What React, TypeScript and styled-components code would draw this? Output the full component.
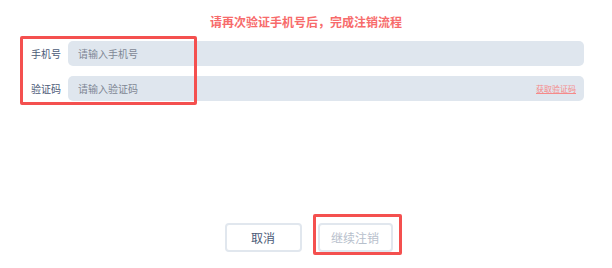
import React from "react";
import styled, { createGlobalStyle } from "styled-components";

const Global = createGlobalStyle`
  html, body { margin: 0; padding: 0; background: #fff; }
  body { font-family: "Noto Sans CJK SC", "Noto Sans", sans-serif; }
`;

const Page = styled.div`
  position: relative;
  width: 612px;
  height: 268px;
  display: flex;
  flex-direction: column;
  box-sizing: border-box;
`;

const Title = styled.div`
  margin-top: 14px;
  text-align: center;
  font-size: 12px;
  line-height: 16px;
  font-weight: 700;
  color: #f76b6b;
`;

const Form = styled.div`
  margin-top: 11px;
  padding: 0 28px 0 31px;
  display: flex;
  flex-direction: column;
  gap: 10px;
`;

const Row = styled.div`
  display: flex;
  align-items: center;
`;

const Label = styled.div`
  width: 37px;
  font-size: 10px;
  color: #4b5a77;
  white-space: nowrap;
`;

const Field = styled.div`
  flex: 1;
  height: 25px;
  border-radius: 5px;
  background: #dfe6ee;
  display: flex;
  align-items: center;
  padding: 0 8px 0 10px;
`;

const Input = styled.input`
  flex: 1;
  border: none;
  outline: none;
  background: transparent;
  font-family: inherit;
  font-size: 10px;
  color: #4b5a77;
  padding: 0;
  &::placeholder { color: #7e8794; }
`;

const Link = styled.a`
  font-size: 8px;
  color: #f58a8a;
  text-decoration: underline;
  cursor: pointer;
`;

const Buttons = styled.div`
  margin-top: auto;
  margin-bottom: 16px;
  display: flex;
  justify-content: center;
  gap: 16px;
  padding-left: 5px;
`;

const Button = styled.button<{ $muted?: boolean }>`
  height: 29px;
  width: ${(p) => (p.$muted ? 75 : 77)}px;
  box-sizing: border-box;
  border: 2px solid #e1e7ee;
  border-radius: 4px;
  background: #fff;
  font-family: inherit;
  font-size: 12px;
  color: ${(p) => (p.$muted ? "#b7c0cc" : "#4b5a77")};
  padding: 0;
`;

const Mark = styled.div<{ $l: number; $t: number; $w: number; $h: number }>`
  position: absolute;
  left: ${(p) => p.$l}px;
  top: ${(p) => p.$t}px;
  width: ${(p) => p.$w}px;
  height: ${(p) => p.$h}px;
  box-sizing: border-box;
  border: 3.5px solid #f4504f;
  border-radius: 2px;
  pointer-events: none;
`;

export default function App() {
  return (
    <Page>
      <Global />
      <Title>请再次验证手机号后，完成注销流程</Title>
      <Form>
        <Row>
          <Label>手机号</Label>
          <Field>
            <Input placeholder="请输入手机号" />
          </Field>
        </Row>
        <Row>
          <Label>验证码</Label>
          <Field>
            <Input placeholder="请输入验证码" />
            <Link>获取验证码</Link>
          </Field>
        </Row>
      </Form>
      <Buttons>
        <Button>取消</Button>
        <Button $muted>继续注销</Button>
      </Buttons>
      <Mark $l={20} $t={36} $w={177} $h={69} />
      <Mark $l={313} $t={214} $w={89} $h={41} />
    </Page>
  );
}
